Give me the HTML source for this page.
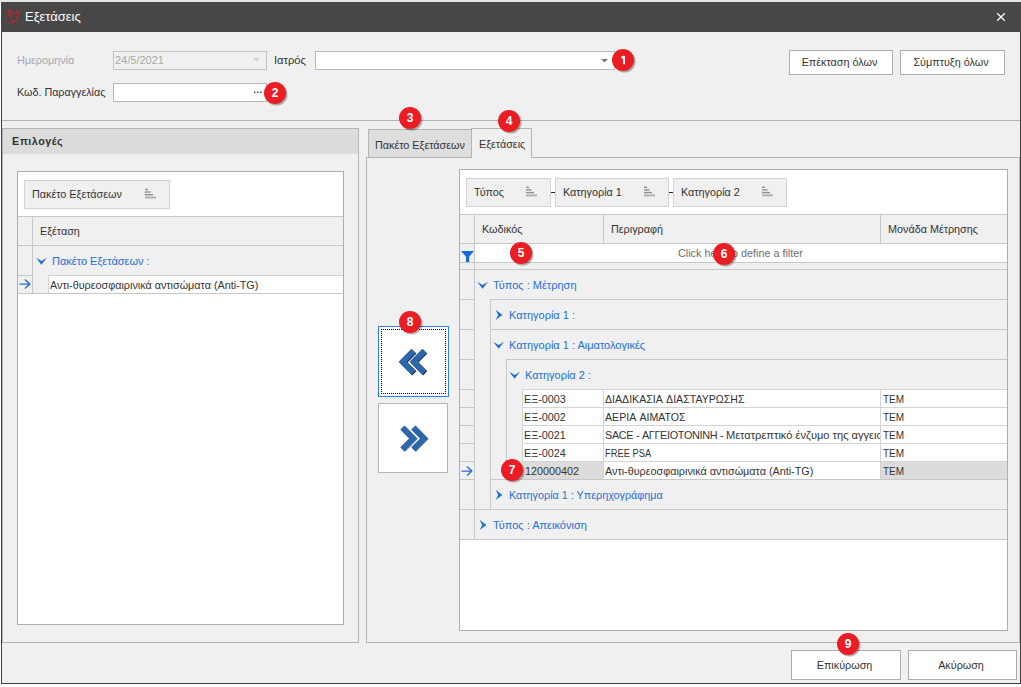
<!DOCTYPE html>
<html><head><meta charset="utf-8">
<style>
*{margin:0;padding:0;box-sizing:border-box}
html,body{width:1021px;height:687px;overflow:hidden;background:#ffffff;font-family:"Liberation Sans",sans-serif;font-size:10.8px;color:#333}
.a{position:absolute}
.t{position:absolute;white-space:nowrap;line-height:12px}
.hl{position:absolute;height:1px}
.vl{position:absolute;width:1px}
.badge{position:absolute;width:22px;height:22px;border-radius:50%;background:#ea1c24;color:#fff;font-weight:bold;font-size:12px;text-align:center;line-height:22px;box-shadow:1.5px 1.5px 1px rgba(0,0,0,.32)}
.btn{position:absolute;background:#fff;border:1px solid #acacac;text-align:center;color:#333}
.gbox{position:absolute;background:#f0f0f0;border:1px solid #d3d3d3}
.grp{color:#1f6fd6;font-size:11px}
.up{font-size:10.6px;word-spacing:1.5px}
</style></head><body>
<!-- background strips -->
<div class="a" style="left:0;top:0;width:1021px;height:2px;background:#e6e6e6"></div>
<!-- window -->
<div class="a" style="left:1px;top:2px;width:1020px;height:682px;background:#3f3f3f"></div>
<div class="a" style="left:1px;top:2px;width:1020px;height:30px;background:#474747"></div>
<div class="a" style="left:2px;top:32px;width:1018px;height:651px;background:#f0f0f0"></div>

<!-- title icon -->
<svg class="a" style="left:0;top:0" width="30" height="32" viewBox="0 0 30 32">
<ellipse cx="9.85" cy="11.5" rx="1.9" ry="2.4" fill="#c0262a" transform="rotate(-15 9.85 11.5)"/>
<path d="M10.2 15.6 C8.5 15.4 6.6 15.4 5.8 16.2 C5.2 17.4 5.6 19.2 6.6 20.6 C8 22.4 10.2 23.6 12.3 24.4" fill="none" stroke="#b8272b" stroke-width="1"/>
<path d="M10.4 18.6 C10.8 16.6 11.6 15 12.6 14.2 C14 12.8 15.6 11.6 17 11.6 C18.4 11.8 18.8 13.2 18.6 14.6 C18.4 16.4 17.6 18.4 15.8 20.4" fill="none" stroke="#c0262a" stroke-width="1.1"/>
<circle cx="13.7" cy="21.5" r="1.6" fill="#c0262a"/>
</svg>
<div class="t" style="left:25px;top:10px;font-size:13px;color:#fff;line-height:14px">Εξετάσεις</div>
<!-- close -->
<svg class="a" style="left:996px;top:12px" width="10" height="10" viewBox="0 0 10 10"><path d="M1.2 1.2L8.8 8.8M8.8 1.2L1.2 8.8" stroke="#fff" stroke-width="1.25"/></svg>

<!-- top panel -->
<div class="t" style="left:17px;top:54px;color:#a3a7b5">Ημερομηνία</div>
<div class="a" style="left:113px;top:51px;width:154px;height:19px;border:1px solid #c2c2c2;background:#f0f0f0"></div>
<div class="t" style="left:115px;top:54px;color:#a8a8a8;font-size:11px">24/5/2021</div>
<svg class="a" style="left:253px;top:58px" width="8" height="4"><path d="M0 0H7L3.5 3.5Z" fill="#d0d0d0"/></svg>
<div class="t" style="left:274px;top:54px;color:#333;font-size:11.2px">Ιατρός</div>
<div class="a" style="left:315px;top:51px;width:300px;height:19px;border:1px solid #b8b8b8;background:#fff"></div>
<svg class="a" style="left:601px;top:59px" width="8" height="4"><path d="M0 0H7L3.5 3.5Z" fill="#7a7a7a"/></svg>
<div class="t" style="left:17px;top:86px;color:#333;font-size:10.75px">Κωδ. Παραγγελίας</div>
<div class="a" style="left:113px;top:83px;width:154px;height:19px;border:1px solid #b8b8b8;background:#fff"></div>
<svg class="a" style="left:253px;top:91px" width="10" height="3"><rect x="1" y="0.6" width="1.4" height="1.5" fill="#3a3a3a"/><rect x="4.1" y="0.6" width="1.4" height="1.5" fill="#3a3a3a"/><rect x="7.2" y="0.6" width="1.4" height="1.5" fill="#3a3a3a"/></svg>
<div class="btn t" style="left:789px;top:50px;width:104px;height:25px;line-height:23px;padding-right:3px">Επέκταση όλων</div>
<div class="btn t" style="left:900px;top:50px;width:105px;height:25px;line-height:23px;padding-right:3px">Σύμπτυξη όλων</div>
<div class="hl" style="left:2px;top:120px;width:1018px;background:#b4b4b4"></div>

<!-- left panel -->
<div class="a" style="left:2px;top:128px;width:357px;height:515px;border:1px solid #b4b4b4;background:#f0f0f0"></div>
<div class="a" style="left:3px;top:129px;width:355px;height:25px;background:#dcdcdc"></div>

<div class="t" style="left:12px;top:135px;font-weight:bold;color:#333;letter-spacing:0.45px">Επιλογές</div>
<!-- left grid -->
<div class="a" style="left:17px;top:171px;width:327px;height:454px;border:1px solid #adadad;background:#fff"></div>
<div class="gbox" style="left:24px;top:180px;width:146px;height:29px"></div>
<div class="t" style="left:32px;top:188px">Πακέτο Εξετάσεων</div>
<div class="a" style="left:18px;top:216px;width:325px;height:77px;background:#f0f0f0"></div>
<div class="hl" style="left:18px;top:216px;width:325px;background:#c8c8c8"></div>
<div class="hl" style="left:18px;top:245px;width:325px;background:#c8c8c8"></div>
<div class="vl" style="left:32px;top:216px;height:77px;background:#c8c8c8"></div>
<div class="t" style="left:40px;top:225px">Εξέταση</div>
<div class="hl" style="left:18px;top:275px;width:14px;background:#c8c8c8"></div>
<div class="t grp" style="left:52px;top:255px">Πακέτο Εξετάσεων :</div>
<div class="a" style="left:48px;top:275px;width:295px;height:18px;background:#fff"></div>
<div class="hl" style="left:48px;top:275px;width:295px;background:#d4d4d4"></div>
<div class="vl" style="left:48px;top:275px;height:18px;background:#d4d4d4"></div>
<div class="hl" style="left:18px;top:293px;width:325px;background:#c8c8c8"></div>
<div class="t" style="left:50px;top:279px">Αντι-θυρεοσφαιρινικά αντισώματα (Anti-TG)</div>

<!-- tab control -->
<div class="a" style="left:366px;top:157px;width:654px;height:486px;border:1px solid #b4b4b4;border-right:1px solid #b4b4b4;background:#f0f0f0"></div>
<div class="a" style="left:368px;top:129px;width:104px;height:29px;border:1px solid #b4b4b4;background:#dedede"></div>
<div class="a" style="left:471px;top:128px;width:61px;height:30px;border:1px solid #b4b4b4;border-bottom:none;background:#f0f0f0"></div>
<div class="t" style="left:375px;top:139px">Πακέτο Εξετάσεων</div>
<div class="t" style="left:479px;top:138px">Εξετάσεις</div>

<!-- move buttons -->
<div class="a" style="left:378px;top:326px;width:71px;height:71px;border:1px solid #2f7de1;background:#fff"></div>
<div class="a" style="left:381px;top:329px;width:65px;height:65px;border:1px dotted #000"></div>
<div class="a" style="left:378px;top:403px;width:70px;height:70px;border:1px solid #b4b4b4;background:#fff"></div>
<svg class="a" style="left:378px;top:326px" width="71" height="150" viewBox="378 326 71 150">
<defs>
<path id="chL" d="M12.8 0 L17 4.2 L8.2 13 L17 21.8 L12.8 26 L0 13Z"/>
<path id="chR" d="M4.2 0 L17 13 L4.2 26 L0 21.8 L8.8 13 L0 4.2Z"/>
</defs>
<g fill="#1d2c40"><use href="#chL" x="399.4" y="349.4"/><use href="#chL" x="410.3" y="349.4"/></g>
<g fill="#2f66a9"><use href="#chL" x="398.6" y="348.7"/><use href="#chL" x="409.5" y="348.7"/></g>
<g fill="#2a4f80" opacity="0.6"><use href="#chR" x="400.9" y="426"/><use href="#chR" x="411.8" y="426"/></g>
<g fill="#2f66a9"><use href="#chR" x="400.3" y="425.4"/><use href="#chR" x="411.2" y="425.4"/></g>
</svg>

<!-- right grid -->
<div class="a" style="left:459px;top:169px;width:549px;height:462px;border:1px solid #adadad;background:#fff"></div>
<div class="gbox" style="left:466px;top:178px;width:85px;height:29px"></div>
<div class="t" style="left:474px;top:186px">Τύπος</div>
<div class="hl" style="left:551px;top:192px;width:4px;background:#222"></div>
<div class="gbox" style="left:555px;top:178px;width:114px;height:29px"></div>
<div class="t" style="left:563px;top:186px">Κατηγορία 1</div>
<div class="hl" style="left:669px;top:192px;width:4px;background:#222"></div>
<div class="gbox" style="left:673px;top:178px;width:114px;height:29px"></div>
<div class="t" style="left:681px;top:186px">Κατηγορία 2</div>
<!-- header -->
<div class="a" style="left:460px;top:214px;width:547px;height:30px;background:#f0f0f0;border-top:1px solid #c8c8c8;border-bottom:1px solid #c8c8c8"></div>
<div class="vl" style="left:474px;top:214px;height:30px;background:#c8c8c8"></div>
<div class="vl" style="left:603px;top:214px;height:30px;background:#c8c8c8"></div>
<div class="vl" style="left:880px;top:214px;height:30px;background:#c8c8c8"></div>
<div class="t" style="left:482px;top:223px">Κωδικός</div>
<div class="t" style="left:611px;top:223px">Περιγραφή</div>
<div class="t" style="left:888px;top:223px">Μονάδα Μέτρησης</div>
<!-- filter row -->
<div class="a" style="left:460px;top:244px;width:14px;height:18px;background:#f0f0f0"></div>
<div class="hl" style="left:460px;top:262px;width:547px;background:#c8c8c8"></div>
<div class="t" style="left:678px;top:247px;color:#6d6d6d">Click here to define a filter</div>
<svg class="a" style="left:460px;top:250px" width="15" height="13" viewBox="460 250 15 13"><path d="M461 251 H474 L469.2 256.6 V262 H466 V256.6 Z" fill="#1a68d6"/></svg>
<div class="a" style="left:460px;top:263px;width:547px;height:276px;background:#f0f0f0"></div>
<div class="hl" style="left:460px;top:269px;width:547px;background:#c8c8c8"></div>
<div class="vl" style="left:474px;top:243px;height:296px;background:#c8c8c8"></div>
<!-- group rows -->
<div class="hl" style="left:460px;top:299px;width:14px;background:#c8c8c8"></div>
<div class="hl" style="left:460px;top:329px;width:14px;background:#c8c8c8"></div>
<div class="hl" style="left:460px;top:359px;width:14px;background:#c8c8c8"></div>
<div class="hl" style="left:460px;top:389px;width:14px;background:#c8c8c8"></div>
<div class="hl" style="left:460px;top:479px;width:14px;background:#c8c8c8"></div>
<div class="hl" style="left:490px;top:299px;width:517px;background:#c8c8c8"></div>
<div class="hl" style="left:490px;top:329px;width:517px;background:#c8c8c8"></div>
<div class="hl" style="left:506px;top:359px;width:501px;background:#c8c8c8"></div>
<div class="hl" style="left:490px;top:479px;width:517px;background:#c8c8c8"></div>
<div class="hl" style="left:460px;top:509px;width:547px;background:#c8c8c8"></div>
<div class="hl" style="left:460px;top:539px;width:547px;background:#c8c8c8"></div>
<div class="vl" style="left:490px;top:299px;height:210px;background:#c8c8c8"></div>
<div class="vl" style="left:506px;top:359px;height:120px;background:#c8c8c8"></div>
<div class="t grp" style="left:493px;top:279px">Τύπος : Μέτρηση</div>
<div class="t grp" style="left:509px;top:309px">Κατηγορία 1 :</div>
<div class="t grp" style="left:509px;top:339px">Κατηγορία 1 : Αιματολογικές</div>
<div class="t grp" style="left:525px;top:369px">Κατηγορία 2 :</div>
<div class="t grp" style="left:509px;top:489px;font-size:10.8px">Κατηγορία 1 : Υπερηχογράφημα</div>
<div class="t grp" style="left:493px;top:519px">Τύπος : Απεικόνιση</div>
<!-- data rows -->
<div class="a" style="left:522px;top:389px;width:485px;height:91px;background:#fff"></div>
<div class="a" style="left:523px;top:462px;width:80px;height:17px;background:#dcdcdc"></div>
<div class="a" style="left:881px;top:462px;width:126px;height:17px;background:#dcdcdc"></div>
<div class="hl" style="left:522px;top:389px;width:485px;background:#d4d4d4"></div>
<div class="hl" style="left:522px;top:407px;width:485px;background:#d4d4d4"></div>
<div class="hl" style="left:522px;top:425px;width:485px;background:#d4d4d4"></div>
<div class="hl" style="left:522px;top:443px;width:485px;background:#d4d4d4"></div>
<div class="hl" style="left:522px;top:461px;width:485px;background:#d4d4d4"></div>
<div class="hl" style="left:522px;top:479px;width:485px;background:#c8c8c8"></div>
<div class="vl" style="left:522px;top:389px;height:90px;background:#d4d4d4"></div>
<div class="vl" style="left:603px;top:389px;height:90px;background:#d4d4d4"></div>
<div class="vl" style="left:880px;top:389px;height:90px;background:#d4d4d4"></div>
<div class="hl" style="left:460px;top:407px;width:14px;background:#c8c8c8"></div>
<div class="hl" style="left:460px;top:425px;width:14px;background:#c8c8c8"></div>
<div class="hl" style="left:460px;top:443px;width:14px;background:#c8c8c8"></div>
<div class="hl" style="left:460px;top:461px;width:14px;background:#c8c8c8"></div>
<div class="t" style="left:524px;top:393px">ΕΞ-0003</div>
<div class="t up" style="left:605px;top:393px">ΔΙΑΔΙΚΑΣΙΑ ΔΙΑΣΤΑΥΡΩΣΗΣ</div>
<div class="t" style="left:883px;top:394px;font-size:10px">ΤΕΜ</div>
<div class="t" style="left:524px;top:411px">ΕΞ-0002</div>
<div class="t up" style="left:605px;top:411px">ΑΕΡΙΑ ΑΙΜΑΤΟΣ</div>
<div class="t" style="left:883px;top:412px;font-size:10px">ΤΕΜ</div>
<div class="t" style="left:524px;top:429px">ΕΞ-0021</div>
<div class="a" style="left:604px;top:426px;width:276px;height:17px;overflow:hidden"><div class="t" style="left:1px;top:3px"><span style="letter-spacing:-0.3px">SACE - ΑΓΓΕΙΟΤΟΝΙΝΗ - </span><span style="font-size:11.1px">Μετατρεπτικό ένζυμο της αγγειοτενσίνης</span></div></div>
<div class="t" style="left:883px;top:430px;font-size:10px">ΤΕΜ</div>
<div class="t" style="left:524px;top:447px">ΕΞ-0024</div>
<div class="t" style="left:605px;top:447px;font-size:10.6px;transform:scaleX(0.88);transform-origin:0 0">FREE PSA</div>
<div class="t" style="left:883px;top:448px;font-size:10px">ΤΕΜ</div>
<div class="t" style="left:525px;top:465px">120000402</div>
<div class="t" style="left:605px;top:465px">Αντι-θυρεοσφαιρινικά αντισώματα (Anti-TG)</div>
<div class="t" style="left:883px;top:466px;font-size:10px">ΤΕΜ</div>


<!-- sort icons -->
<svg class="a" style="left:0;top:0" width="1021" height="300" viewBox="0 0 1021 300">
<defs><g id="sic"><rect x="0" y="0" width="3" height="1.4" fill="#8f8f8f"/><rect x="0" y="2.6" width="5.5" height="1.4" fill="#8f8f8f"/><rect x="0" y="5.3" width="8" height="1.4" fill="#8f8f8f"/><rect x="0" y="7.8" width="11" height="2" fill="#b2b2b2"/></g></defs>
<use href="#sic" x="145" y="188.7"/>
<use href="#sic" x="526" y="186.6"/>
<use href="#sic" x="644" y="186.6"/>
<use href="#sic" x="762" y="186.6"/>
</svg>
<!-- group chevrons -->
<svg class="a" style="left:0;top:0" width="1021" height="687" viewBox="0 0 1021 687">
<defs>
<path id="gdn" d="M0 0 L5.4 3.1 L10.8 0 L5.4 6.9Z"/>
<path id="grt" d="M0 0 L6.8 5.1 L0 10.2 L2.6 5.1Z"/>
<path id="arw" d="M0.5 4.9 H10.8 M6 0.4 L10.8 4.9 L6 9.4" fill="none" stroke="#2a6fd6" stroke-width="1.4"/>
</defs>
<g fill="#1f6fd6">
<use href="#gdn" x="477.2" y="281.8"/>
<use href="#grt" x="495.6" y="309.8"/>
<use href="#gdn" x="493.2" y="341.8"/>
<use href="#gdn" x="509.2" y="371.8"/>
<use href="#grt" x="495.6" y="489.8"/>
<use href="#grt" x="479.6" y="519.8"/>
<use href="#gdn" x="36" y="257.8"/>
</g>
<use href="#arw" x="461" y="466.2"/>
<use href="#arw" x="19" y="279.2"/>
</svg>

<!-- bottom buttons -->
<div class="btn t" style="left:791px;top:650px;width:110px;height:30px;line-height:28px;padding-right:3px">Επικύρωση</div>
<div class="btn t" style="left:908px;top:650px;width:109px;height:30px;line-height:28px;padding-right:3px">Ακύρωση</div>

<!-- badges -->
<div class="badge" style="left:612px;top:49px"><svg width="22" height="22" viewBox="0 0 22 22" style="position:absolute;left:0;top:0"><path d="M9.4 9 L12 7.2 V15.2" fill="none" stroke="#fff" stroke-width="1.9" stroke-linejoin="bevel"/></svg></div>
<div class="badge" style="left:264px;top:82px">2</div>
<div class="badge" style="left:399px;top:107px">3</div>
<div class="badge" style="left:498px;top:110px">4</div>
<div class="badge" style="left:510px;top:242px">5</div>
<div class="badge" style="left:713px;top:243px">6</div>
<div class="badge" style="left:501px;top:459px">7</div>
<div class="badge" style="left:399px;top:311px">8</div>
<div class="badge" style="left:837px;top:633px">9</div>
</body></html>
